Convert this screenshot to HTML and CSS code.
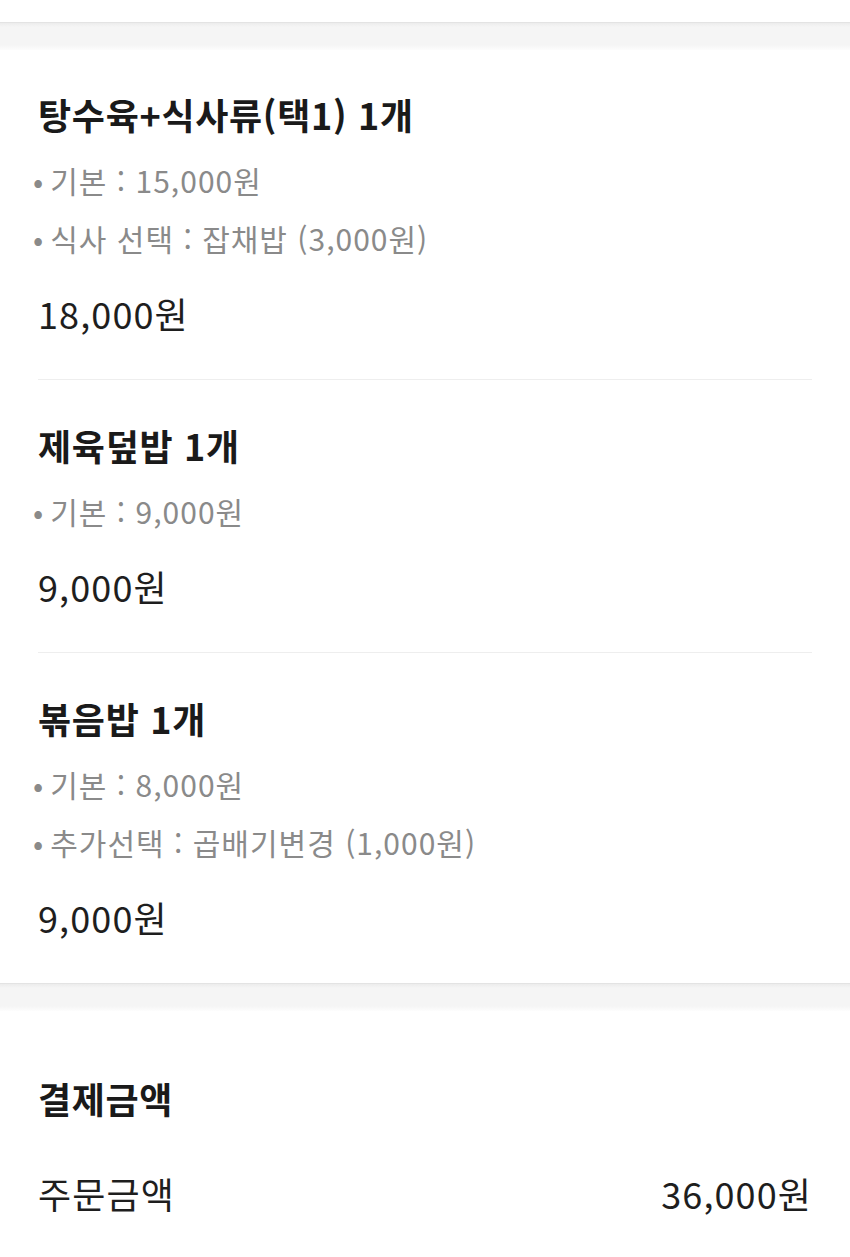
FILE: index.html
```html
<!DOCTYPE html>
<html lang="ko">
<head>
<meta charset="UTF-8">
<meta name="viewport" content="width=device-width, initial-scale=1.0">
<title>주문 상세</title>
<link rel="stylesheet" href="styles.css">
</head>
<body>

<div class="top-bar"></div>
<div class="gap"></div>

<div class="section" id="orderItems">
  <div class="item">
    <h3 class="item-name">탕수육+식사류(택1) 1개</h3>
    <ul class="options">
      <li>기본 : 15,000원</li>
      <li>식사 선택 : 잡채밥 (3,000원)</li>
    </ul>
    <p class="item-price">18,000원</p>
  </div>
  <div class="item">
    <h3 class="item-name">제육덮밥 1개</h3>
    <ul class="options">
      <li>기본 : 9,000원</li>
    </ul>
    <p class="item-price">9,000원</p>
  </div>
  <div class="item">
    <h3 class="item-name">볶음밥 1개</h3>
    <ul class="options">
      <li>기본 : 8,000원</li>
      <li>추가선택 : 곱배기변경 (1,000원)</li>
    </ul>
    <p class="item-price">9,000원</p>
  </div>
</div>

<div class="gap"></div>

<div class="section" id="payment">
  <h2 class="section-title">결제금액</h2>
  <div class="pay-row">
    <span>주문금액</span>
    <span>36,000원</span>
  </div>
  <div class="pay-row">
    <span>배달팁</span>
    <span>3,000원</span>
  </div>
</div>

</body>
</html>
```

FILE: styles.css
```css
body {
  font-family: "Noto Sans CJK KR", "Noto Sans", sans-serif;
  margin: 0;
  padding: 0;
  background-color: white;
  color: #222;
}

.top-bar {
  height: 22px;
  background-color: white;
}

.gap {
  height: 27px;
  border-top: 1px solid #e3e3e3;
  background: linear-gradient(to bottom, #ececec 0, #f5f5f5 4px, #f5f5f5 22px, #fdfdfd 27px);
}

.section {
  padding: 0 38px;
  background-color: white;
}

.item {
  padding: 35px 0 36px;
  border-bottom: 1px solid #eeeeee;
}

.item:first-child {
  padding-top: 34px;
}

.item:last-child {
  border-bottom: none;
}

.item-name {
  margin: 0;
  font-size: 36px;
  line-height: 60px;
  font-weight: 700;
  letter-spacing: 0.7px;
  color: #1a1a1a;
}

.options {
  list-style: none;
  margin: 7px 0 0 0;
  padding: 0;
}

.options li {
  font-size: 30px;
  line-height: 58px;
  color: #8a8a8a;
  letter-spacing: 1px;
  margin-left: -5px;
}

.options li::before {
  content: "•";
  margin-right: 6px;
}

.item-price {
  margin: 16px 0 0 0;
  font-size: 36px;
  line-height: 60px;
  letter-spacing: 1.1px;
  color: #1e1e1e;
}

#payment {
  padding-top: 57px;
}

.section-title {
  margin: 0;
  font-size: 36px;
  line-height: 60px;
  font-weight: 700;
  letter-spacing: 0.6px;
  color: #1a1a1a;
}

.pay-row {
  display: flex;
  justify-content: space-between;
  margin-top: 35px;
  font-size: 36px;
  line-height: 60px;
  letter-spacing: 1.1px;
  color: #1e1e1e;
}
```
